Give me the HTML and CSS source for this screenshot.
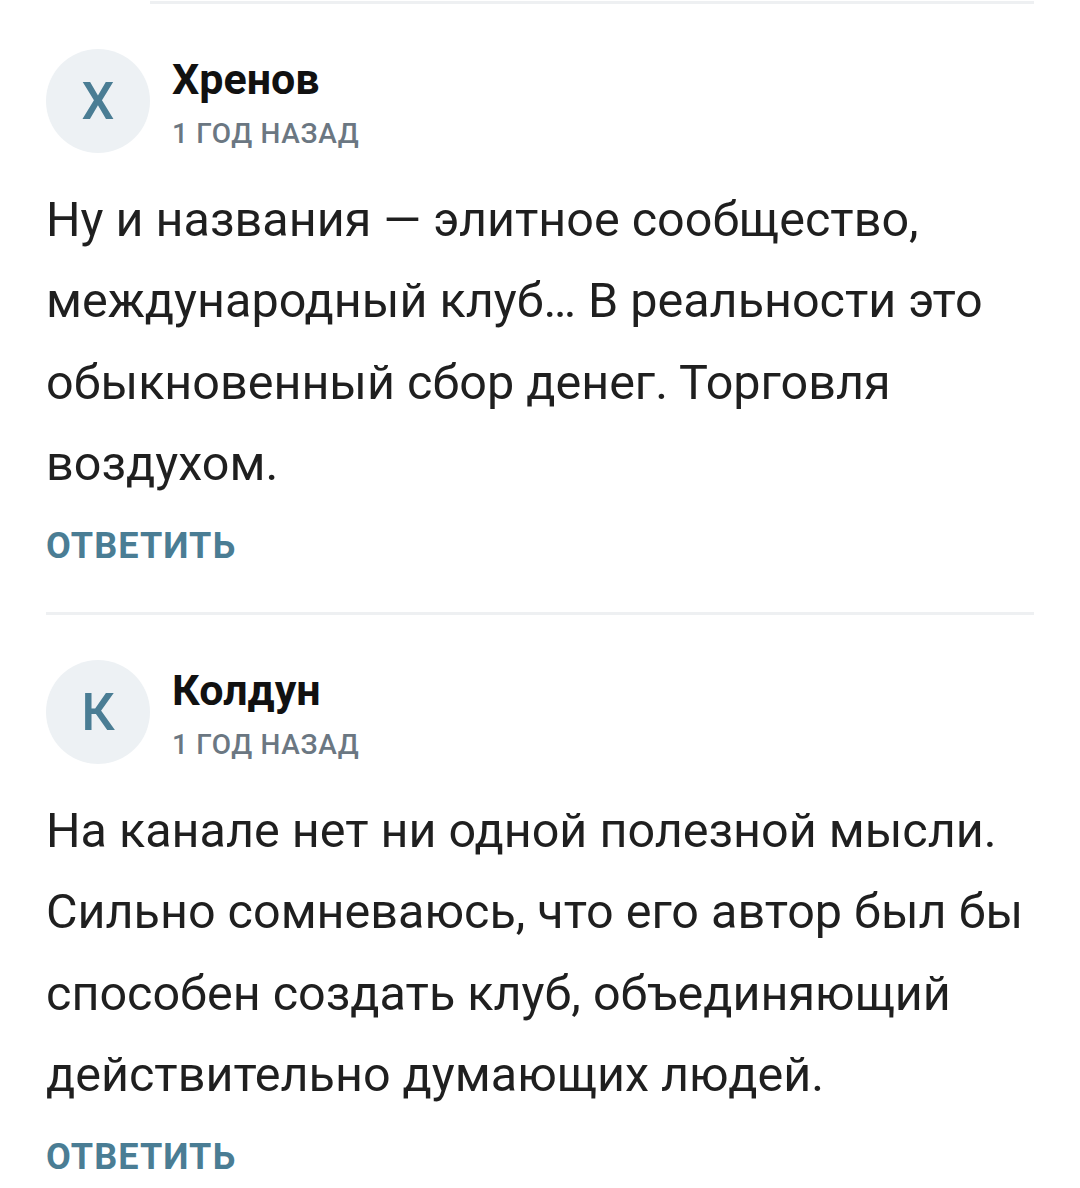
FILE: index.html
```html
<!DOCTYPE html>
<html lang="ru">
<head>
<meta charset="utf-8">
<link rel="stylesheet" href="styles.css">
</head>
<body>
<div class="list">
  <div class="divider divider-indent"></div>
  <div class="comment">
    <div class="head">
      <div class="avatar">Х</div>
      <div class="meta">
        <div class="name">Хренов</div>
        <div class="time">1 ГОД НАЗАД</div>
      </div>
    </div>
    <p class="text">Ну и названия — элитное сообщество, международный клуб… В реальности это обыкновенный сбор денег. Торговля воздухом.</p>
    <div class="reply">ОТВЕТИТЬ</div>
  </div>
  <div class="divider"></div>
  <div class="comment">
    <div class="head">
      <div class="avatar">К</div>
      <div class="meta">
        <div class="name">Колдун</div>
        <div class="time">1 ГОД НАЗАД</div>
      </div>
    </div>
    <p class="text">На канале нет ни одной полезной мысли. Сильно сомневаюсь, что его автор был бы способен создать клуб, объединяющий действительно думающих людей.</p>
    <div class="reply">ОТВЕТИТЬ</div>
  </div>
</div>
</body>
</html>
```

FILE: styles.css
```css
html, body {
  margin: 0;
  padding: 0;
  background: #ffffff;
}
body {
  font-family: Roboto, "Noto Sans", sans-serif;
  color: #1f1f1f;
}
.list {
  padding: 1px 46px 0 46px;
}
.divider {
  height: 3px;
  background: #eef0f2;
}
.divider-indent {
  margin-left: 104px;
}
.comment {
  padding-top: 45px;
  padding-bottom: 44px;
}
.head {
  display: flex;
  gap: 22px;
  align-items: flex-start;
}
.avatar {
  width: 104px;
  height: 104px;
  border-radius: 50%;
  background: #edf1f4;
  color: #4a7d94;
  font-size: 52px;
  font-weight: 500;
  display: flex;
  align-items: center;
  justify-content: center;
  flex: none;
}
.meta {
  padding-top: 6px;
}
.name {
  font-size: 43px;
  line-height: 48px;
  font-weight: 700;
  color: #111111;
}
.time {
  margin-top: 14px;
  font-size: 28px;
  line-height: 34px;
  font-weight: 500;
  letter-spacing: 0.7px;
  color: #6b7782;
}
.text {
  margin: 26px 0 0 0;
  font-size: 48.5px;
  line-height: 81.3px;
  color: #1f1f1f;
}
.reply {
  margin-top: 20px;
  font-size: 36px;
  line-height: 44px;
  font-weight: 700;
  letter-spacing: 1.1px;
  color: #4a7d94;
}
```
